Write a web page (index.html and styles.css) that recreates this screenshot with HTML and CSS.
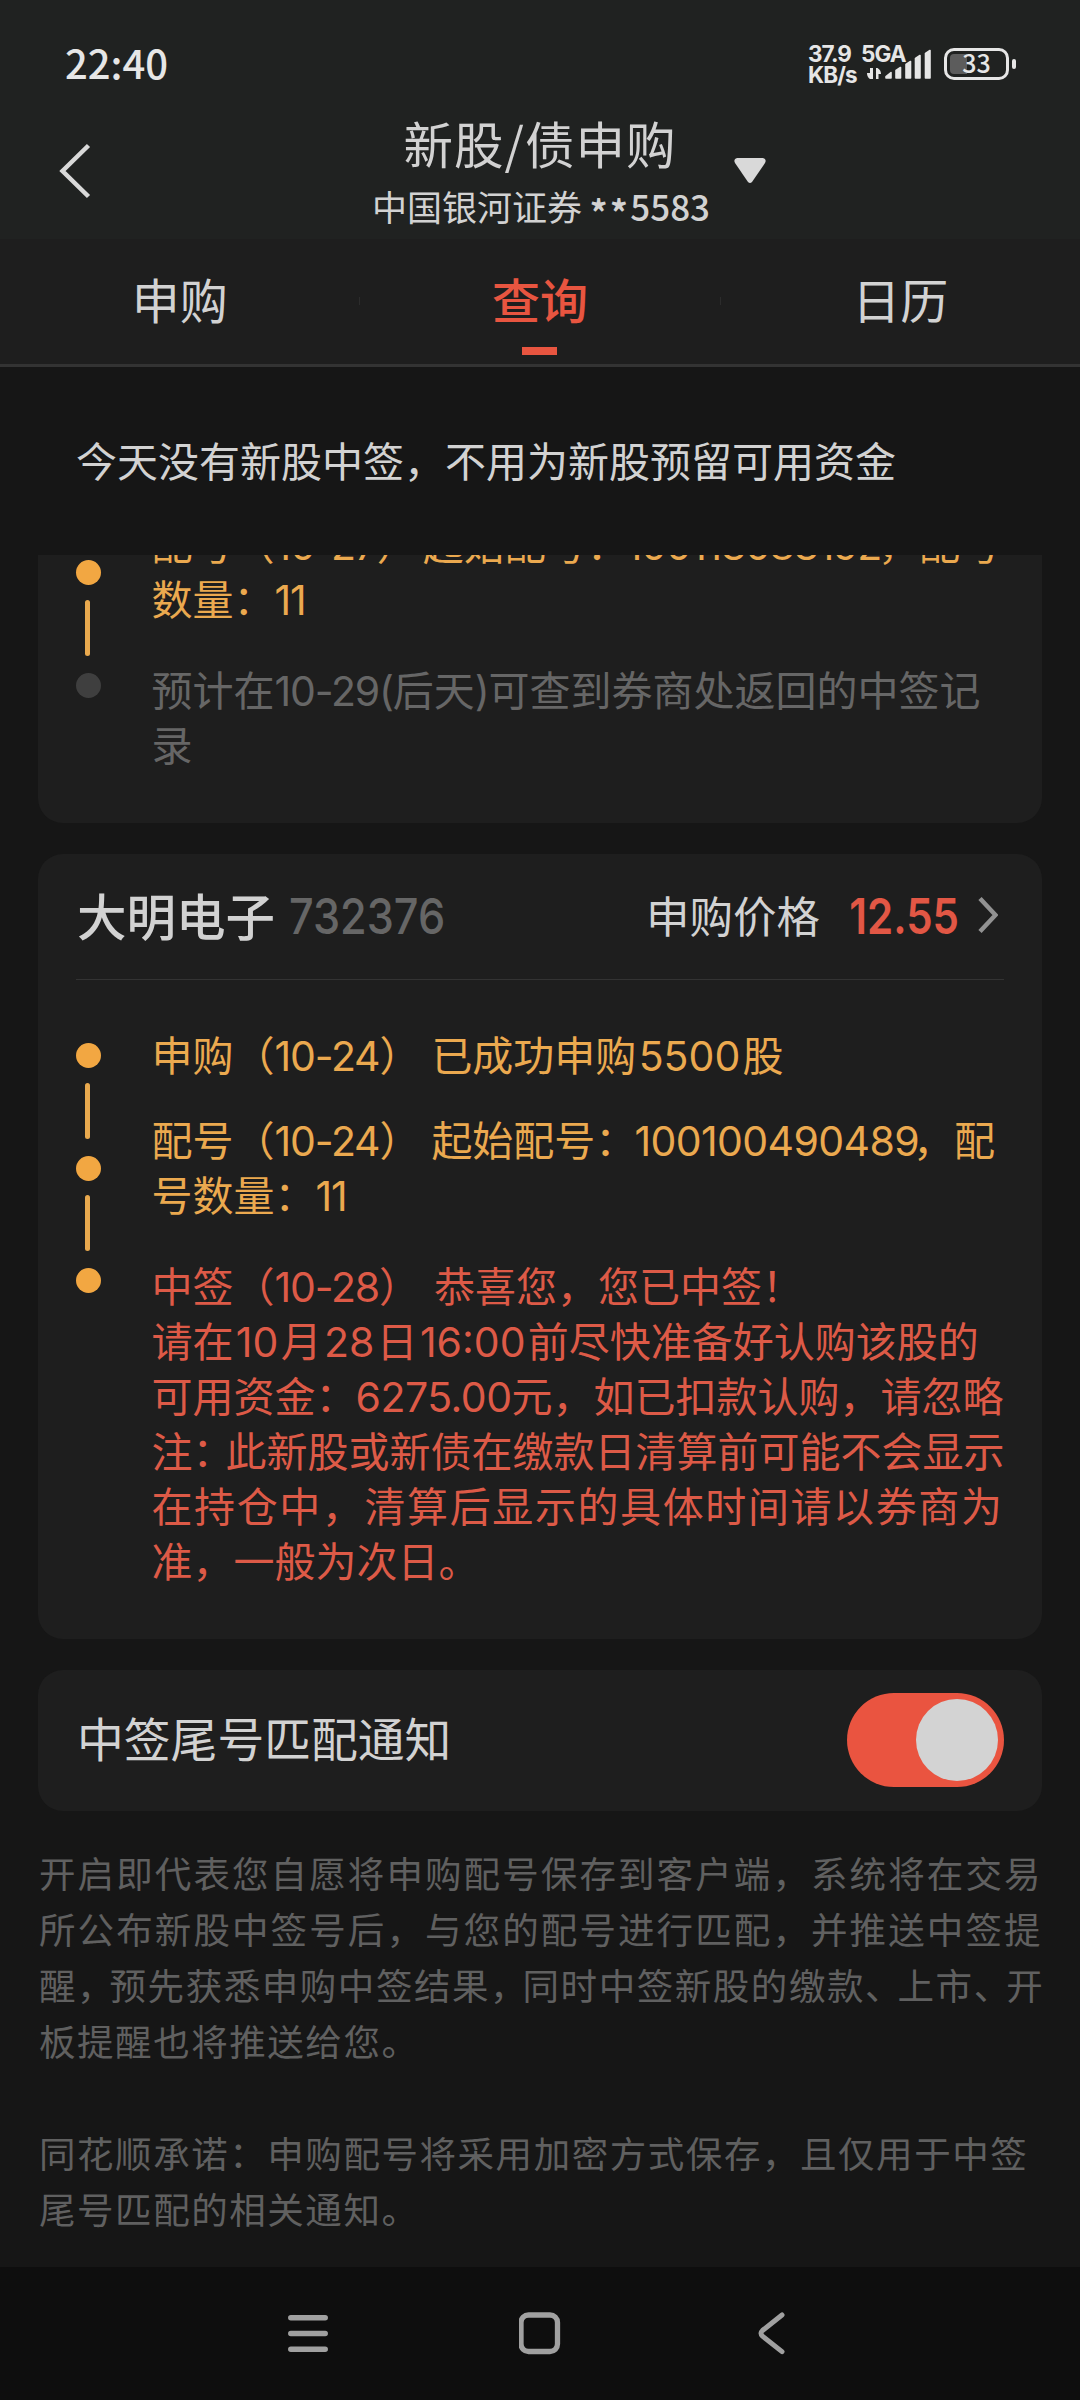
FILE: index.html
```html
<!DOCTYPE html>
<html lang="zh-CN">
<head>
<meta charset="utf-8">
<title>新股/债申购</title>
<link rel="stylesheet" href="styles.css">
</head>
<body>
<div class="screen">
  <header class="top">
    <div class="status">
      <span class="clock">22:40</span>
      <div class="status-right">
        <div class="speed"><span>37.9</span><span>KB/s</span></div>
        <div class="signal">
          <span class="net">5GA</span>
          <svg class="bars" width="70" height="40" viewBox="0 0 70 40">
            <path d="M9 28h3v11H9q-3-2-3-6h3zM15 28h1.500q3.500 2 3.500 6h-2.500v5H15z" fill="#e6e6e6"/>
            <path d="M25 38v-1.500l5-4V38zM35 38v-7.500l4.500-3V38zM45 38V24.500l4.500-3V38zM54.500 38V18.500l4.500-3V38zM64.500 38V13.500l4.500-3V38z" fill="#e6e6e6" stroke="#e6e6e6" stroke-width="1.600" stroke-linejoin="round"/>
          </svg>
        </div>
        <div class="battery"><span class="level"></span><span class="pct">33</span><span class="nub"></span></div>
      </div>
    </div>
    <div class="titlebar">
      <svg class="back" width="32" height="56" viewBox="0 0 32 56"><path d="M29.500 2.500 3.500 28l26 25.500" fill="none" stroke="#d9d9d9" stroke-width="4.500"/></svg>
      <div class="titles">
        <h1>新股/债申购</h1>
        <p>中国银河证券 <span class="stars">**</span><span class="acct">5583</span></p>
      </div>
      <svg class="drop" width="32" height="26" viewBox="0 0 32 26"><path d="M3 0h26q4 1 2 5L18 24q-2 2-4 0L1 5Q-1 1 3 0z" fill="#d9d9d9"/></svg>
    </div>
  </header>
  <nav class="tabs">
    <a class="tab">申购</a><i></i><a class="tab on">查询</a><i></i><a class="tab">日历</a>
  </nav>
  <p class="notice">今天没有新股中签，不用为新股预留可用资金</p>

  <main class="list">
    <section class="card prev">
      <div class="rail"><b></b><s></s><b class="off"></b></div>
      <div class="steps">
        <div class="step gold"><p>配号（<span class="n date">10-27</span>）<span class="sp half"></span>起始配号：<span class="n serial ones">100113083192</span>，配号</p><p>数量：<span class="n date">11</span></p></div>
        <div class="step gray"><p>预计在<span class="n date">10-29(</span>后天<span class="n date">)</span>可查到券商处返回的中签记</p><p>录</p></div>
      </div>
    </section>

    <section class="card stock">
      <div class="head">
        <h2>大明电子</h2><span class="code">732376</span>
        <span class="plabel">申购价格</span><span class="price">12.55</span>
        <svg width="20" height="38" viewBox="0 0 20 38"><path d="M2 2.500 17.500 19 2 35.500" fill="none" stroke="#929292" stroke-width="4.500"/></svg>
      </div>
      <div class="body">
        <div class="rail"><b></b><s></s><b></b><s></s><b></b></div>
        <div class="steps">
          <div class="step gold first"><p>申购（<span class="n date">10-24</span>）<span class="sp"></span>已成功申购<span class="n">5500</span>股</p></div>
          <div class="step gold"><p>配号（<span class="n date">10-24</span>）<span class="sp"></span>起始配号：<span class="n serial">100100490489</span>，配</p><p>号数量：<span class="n date">11</span></p></div>
          <div class="step red">
            <p>中签（<span class="n date">10-28</span>）<span class="sp"></span>恭喜您，您已中签！</p>
            <p>请在<span class="n">10</span>月<span class="n">28</span>日<span class="n">16:00</span>前尽快准备好认购该股的</p>
            <p>可用资金：<span class="n amount">6275.00</span>元，如已扣款认购，请忽略</p>
            <p>注<span class="colon">：</span>此新股或新债在缴款日清算前可能不会显示</p>
            <p class="wide">在持仓中，清算后显示的具体时间请以券商为</p>
            <p>准，一般为次日。</p>
          </div>
        </div>
      </div>
    </section>

    <section class="card switch-row"><span>中签尾号匹配通知</span><div class="switch"><em></em></div></section>

    <div class="terms">
      <p class="loose">开启即代表您自愿将申购配号保存到客户端，系统将在交易</p>
      <p class="loose">所公布新股中签号后，与您的配号进行匹配，并推送中签提</p>
      <p>醒<u>，</u>预先获悉申购中签结果<u>，</u>同时中签新股的缴款<u>、</u>上市<u>、</u>开</p>
      <p>板提醒也将推送给您。</p>
      <p class="gap">同花顺承诺：申购配号将采用加密方式保存，且仅用于中签</p>
      <p>尾号匹配的相关通知。</p>
    </div>
  </main>

  <footer class="sysnav">
    <svg width="42" height="44" viewBox="0 0 42 44"><path d="M3.800 6.800h34.400M3.800 22.500h34.400M3.800 38.200h34.400" stroke="#a0a0a0" stroke-width="5.500" stroke-linecap="round"/></svg>
    <svg width="42" height="44" viewBox="0 0 42 44"><rect x="2" y="4" width="36.500" height="36.500" rx="7.500" fill="none" stroke="#a0a0a0" stroke-width="5.300"/></svg>
    <svg width="42" height="44" viewBox="0 0 42 44"><path d="M31 4 11.500 19.500q-3 2.800 0 5.600L31 40.600" fill="none" stroke="#a0a0a0" stroke-width="5" stroke-linecap="round"/></svg>
  </footer>
</div>
</body>
</html>
```
FILE: styles.css
```css
* { box-sizing: border-box; margin: 0; padding: 0; }
body { background: #161616; }
.screen {
  width: 1080px; height: 2400px; overflow: hidden;
  display: flex; flex-direction: column;
  font-family: "Noto Sans CJK SC", sans-serif; color: #d2d2d2;
  text-spacing-trim: space-all; white-space: nowrap; background: #161616;
}
p, h1, h2 { font-weight: 400; }

.top { height: 239px; background: #202221; flex: none; }
.status { height: 110px; padding: 0 65px; display: flex; justify-content: space-between; color: #e6e6e6; }
.clock { font-size: 40px; font-weight: 500; line-height: 58px; margin-top: 33px; }
.status-right { display: flex; }
.speed { width: 53px; margin-top: 43px; display: flex; flex-direction: column; font: 700 22.500px/21px Inter, sans-serif; letter-spacing: -.9px; }
.signal { position: relative; width: 70px; margin-top: 43px; font: 700 22.500px/21px Inter, sans-serif; letter-spacing: -.9px; }
.bars { position: absolute; left: 0; top: -3px; }
.battery { position: relative; width: 65px; height: 32px; margin: 48px 6px 0 13px; border: 3.500px solid #e6e6e6; border-radius: 10px; }
.level { position: absolute; left: 3px; top: 2.500px; width: 17px; height: 20px; background: #5c5c5c; border-radius: 4px 0 0 4px; }
.pct { position: absolute; left: 0; right: 0; top: -1px; font-size: 25px; line-height: 25px; font-weight: 500; text-align: center; }
.nub { position: absolute; right: -10px; top: 8px; width: 4px; height: 10px; border-radius: 2px; background: #e6e6e6; }

.titlebar { height: 129px; position: relative; display: flex; justify-content: center; }
.titles { display: flex; flex-direction: column; align-items: center; margin-top: -3px; }
h1 { font-size: 49.500px; line-height: 72px; letter-spacing: 1px; }
.titles p { font-size: 35px; line-height: 50px; margin: 2px 0 0 2px; }
.stars { display: inline-block; font-weight: 700; letter-spacing: 2.500px; line-height: 1; transform: translateY(5px); }
.acct { font-weight: 500; }
.back { position: absolute; left: 59px; top: 33px; }
.drop { position: absolute; left: 734px; top: 48px; }

.tabs { height: 128px; flex: none; background: #1e1e1e; border-bottom: 3px solid #333; display: flex; align-items: flex-start; }
.tabs i { width: 1px; height: 8px; margin-top: 58px; background: #2c2c2c; }
.tab { flex: 1; height: 125px; position: relative; text-align: center; font-size: 48px; line-height: 118px; }
.tab.on { color: #e85540; font-weight: 500; }
.tab.on::after { content: ""; position: absolute; left: 50%; margin-left: -18px; bottom: 9px; width: 35px; height: 8px; background: #e85540; }

.notice { height: 188px; flex: none; padding-left: 76px; font-size: 41px; line-height: 184px; }

.list { flex: 1; min-height: 0; display: flex; flex-direction: column; overflow: hidden; padding: 0 38px; }
.card { background: #1e1e1e; border-radius: 25px; margin-bottom: 31px; flex: none; }
.prev { height: 268px; border-radius: 0 0 25px 25px; display: flex; align-items: flex-start; overflow: hidden; padding: 5px 38px 0; }
.prev .steps { margin-top: -45px; }
.rail { width: 75.500px; flex: none; display: flex; flex-direction: column; }
.rail b { width: 25px; height: 25px; border-radius: 50%; background: #f2a742; }
.rail b.off { background: #3f3f3f; }
.rail s { width: 5px; height: 56px; border-radius: 3px; background: #e9a94e; margin: 14.500px 0 17px 9px; }
.steps { font-size: 41px; line-height: 55px; }
.step { margin-bottom: 36px; }
.step.first { margin-bottom: 30px; }
.gold { color: #eba94f; }
.gray { color: #666; }
.red { color: #dd5a47; }
.n { font-family: Inter, sans-serif; line-height: 1; margin: 0 2.300px; }
.n.date { margin: 0; letter-spacing: -1.200px; }
.n.serial { margin: 0 -6px 0 -2px; letter-spacing: -.6px; }
.n.ones { margin-right: -3px; letter-spacing: -1.300px; }
.n.amount { margin: 0 0 0 -1px; letter-spacing: -.5px; }
.sp { display: inline-block; width: 14px; }
.gold .sp { width: 11px; }
.gold .sp.half { width: 5px; }
.colon { letter-spacing: -8px; }
.wide { letter-spacing: 1.600px; }

.stock { height: 785px; padding: 0 38px; }
.head { height: 126px; border-bottom: 1px solid #333; display: flex; align-items: center; padding: 0 6px 5px 1px; }
h2 { font-size: 49.500px; font-weight: 500; }
.code, .price { font-family: Inter, sans-serif; font-size: 50px; font-weight: 500; padding-top: 4px; }
.code { color: #666; margin-left: 14px; transform: scaleX(.865); transform-origin: left; }
.plabel { font-size: 43.500px; margin-left: auto; }
.price { width: 131px; text-align: right; font-weight: 600; color: #e25745; margin: 0 19px 0 8px; transform: scaleX(.84); transform-origin: right; }
.head svg { margin-top: 1px; }
.body { display: flex; padding-top: 46px; align-items: flex-start; }
.body .rail { margin-top: 17px; }

.switch-row { height: 141px; padding: 0 38px 0 39px; display: flex; align-items: center; justify-content: space-between; font-size: 46.800px; }
.switch-row span { margin-top: -8px; }
.switch { width: 157px; height: 94px; margin-top: -2px; border-radius: 47px; background: #ea5440; padding: 6px; display: flex; justify-content: flex-end; }
.switch em { width: 82px; height: 82px; border-radius: 50%; background: #d3d3d3; }

.terms { color: #606060; font-size: 36.500px; line-height: 56px; letter-spacing: 1.550px; margin-top: 3px; padding-left: 1px; }
.loose { letter-spacing: 2.100px; }
.terms u { text-decoration: none; letter-spacing: -4px; }
.gap { margin-top: 56px; }

.sysnav { height: 133px; flex: none; background: #0e0e0e; display: flex; align-items: center; justify-content: center; gap: 190px; padding-bottom: 2px; }
```
